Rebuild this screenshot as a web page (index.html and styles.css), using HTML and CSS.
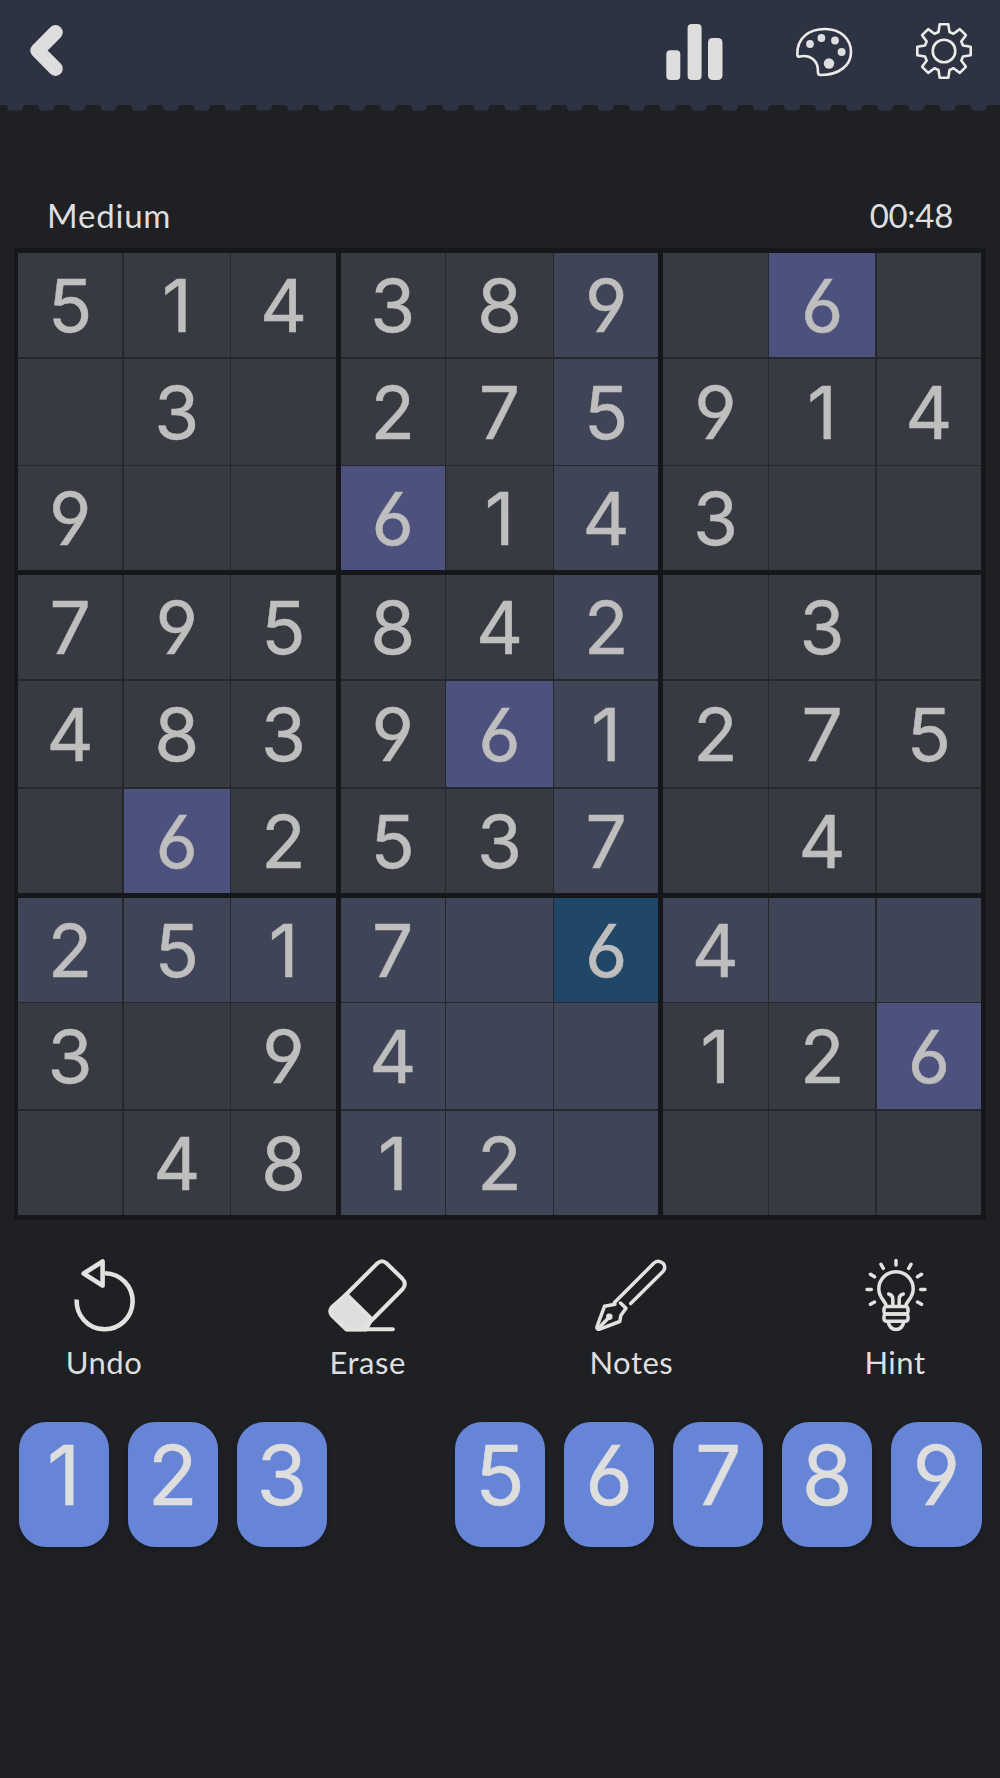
FILE: index.html
```html
<!DOCTYPE html>
<html lang="en">

<head>
    <meta charset="UTF-8">
    <meta name="viewport" content="width=device-width, initial-scale=1.0">
    <title>Sudoku</title>
    <link rel="stylesheet" href="styles.css">
</head>

<body>
    <header class="topbar">
        <svg class="icon-back" viewBox="28 20 40 62">
            <path d="M55.5 32.3 L37.5 50.5 L55.5 68.7" />
        </svg>
        <div class="topbar-actions">
            <svg class="icon-stats" viewBox="664 20 62 62">
                <rect x="666.3" y="50.3" width="14" height="29.7" rx="4" />
                <rect x="687.6" y="24" width="14" height="56" rx="4" />
                <rect x="708" y="38" width="14.5" height="42" rx="4.5" />
            </svg>
            <svg class="icon-line" viewBox="793 20 62 62">
                <path d="M797.3 55 C796.6 38 809 29 825 29 C841 29 851 39.5 851 52 C851 65 840 75 820 75 Q817.7 74.6 817.9 71 C818 61 810.5 54 799.5 56.6 Q797.5 56.9 797.3 55 Z" />
                <g class="dots">
                    <circle cx="810" cy="44" r="3.9" />
                    <circle cx="821.4" cy="38" r="3.9" />
                    <circle cx="835" cy="40.5" r="3.9" />
                    <circle cx="841.6" cy="52" r="4" />
                    <circle cx="829" cy="63.5" r="5.2" />
                </g>
            </svg>
            <svg class="icon-line" viewBox="-31 -31 62 62">
                <path d="M-5.5 -19 L-4.3 -26.7 L4.3 -26.7 L5.5 -19 L9.5 -17.3 L15.8 -21.9 L21.9 -15.8 L17.3 -9.5 L19 -5.5 L26.7 -4.3 L26.7 4.3 L19 5.5 L17.3 9.5 L21.9 15.8 L15.8 21.9 L9.5 17.3 L5.5 19 L4.3 26.7 L-4.3 26.7 L-5.5 19 L-9.5 17.3 L-15.8 21.9 L-21.9 15.8 L-17.3 9.5 L-19 5.5 L-26.7 4.3 L-26.7 -4.3 L-19 -5.5 L-17.3 -9.5 L-21.9 -15.8 L-15.8 -21.9 L-9.5 -17.3 Z" />
                <circle r="11.3" />
            </svg>
        </div>
    </header>
    <svg class="teeth" width="1000" height="6">
        <defs>
            <pattern id="tooth" width="31.07" height="6" patternUnits="userSpaceOnUse">
                <path d="M6.8 0 H24 L22 4.4 Q21.4 5.5 20.4 5.5 H10 Q9 5.5 8.6 4.4 Z" />
            </pattern>
        </defs>
        <rect width="1000" height="6" fill="url(#tooth)" />
    </svg>

    <main>
        <div class="info">
            <span class="level">Medium</span>
            <span class="timer">00:48</span>
        </div>

        <!-- Board is filled in by the script, one box at a time -->
        <div class="board" id="board"></div>

        <div class="tools">
            <div class="tool">
                <svg viewBox="64 1255 80 80">
                    <path class="thick" d="M76.7 1299.5 A28 28 0 1 0 105 1273.2" />
                    <path class="thick" d="M83.7 1273.5 L102.6 1261.5 V1285.6 Z" />
                </svg>
                <span>Undo</span>
            </div>
            <div class="tool">
                <svg viewBox="328 1255 80 80">
                    <path class="solid" d="M346.5 1294.5 L371.5 1319 L366 1329.5 H346.5 L332 1315.5 Q328.5 1311 332 1307 Z" />
                    <path d="M333 1307.5 L377.5 1263.2 Q382 1259.3 386.5 1263.2 L402.5 1278.8 Q407 1283.5 402.7 1289 L366 1326" />
                    <path d="M347 1329.2 H392.8" />
                </svg>
                <span>Erase</span>
            </div>
            <div class="tool">
                <svg class="thin" viewBox="592 1255 80 80">
                    <path d="M631.7 1303.5 L664 1271.5 Q667.5 1267 664 1263.3 Q659.5 1259.3 655 1263 L615.5 1302.5" />
                    <path d="M621.5 1303 L627 1308.3 L621.8 1315.5 L620.8 1321.5 L600 1329.3 Q597.5 1329.5 598 1326.5 L605.5 1306.3 L616 1304.3" />
                    <path d="M599 1328.5 L610.5 1317" />
                    <circle class="solid" cx="610.3" cy="1316.8" r="1.5" />
                </svg>
                <span>Notes</span>
            </div>
            <div class="tool">
                <svg class="thin" viewBox="855 1255 80 80">
                    <path d="M886 1305.5 C885.5 1301 878.8 1298 878.8 1289 A17.2 17.2 0 0 1 913.2 1289 C913.2 1298 906.5 1301 906 1305.5" />
                    <path d="M888.7 1294 Q892.8 1295 892.8 1299 V1305 M903.3 1294 Q899.2 1295 899.2 1299 V1305" />
                    <rect x="884" y="1306.5" width="24" height="7.5" rx="2.5" />
                    <rect x="884" y="1314" width="24" height="7.2" rx="2.5" />
                    <path d="M888 1321.5 Q890 1329.6 896 1329.6 Q902 1329.6 904 1321.5" />
                    <path d="M896 1260.6 V1265 M881 1264.3 L883.3 1268.3 M911 1264.3 L908.7 1268.3 M870.5 1274.3 L874.5 1276.8 M921.5 1274.3 L917.5 1276.8 M867 1289.6 H871.3 M925 1289.6 H920.7 M870.5 1304.3 L874.5 1302 M921.5 1304.3 L917.5 1302" />
                </svg>
                <span>Hint</span>
            </div>
        </div>

        <div class="keypad">
            <div class="key">1</div>
            <div class="key">2</div>
            <div class="key">3</div>
            <div class="key used"></div>
            <div class="key">5</div>
            <div class="key">6</div>
            <div class="key">7</div>
            <div class="key">8</div>
            <div class="key">9</div>
        </div>
    </main>

    <script>
        const rows = [
            '514389.6.',
            '.3.275914',
            '9..6143..',
            '795842.3.',
            '483961275',
            '.62537.4.',
            '2517.64..',
            '3.94..126',
            '.4812....'
        ];
        const selected = { row: 6, col: 5 };
        const board = document.getElementById('board');

        function cellClass(row, col) {
            if (row === selected.row && col === selected.col) return 'cell selected';
            if (rows[row][col] === rows[selected.row][selected.col]) return 'cell same';
            const sameBox = Math.floor(row / 3) === Math.floor(selected.row / 3) &&
                Math.floor(col / 3) === Math.floor(selected.col / 3);
            if (row === selected.row || col === selected.col || sameBox) return 'cell related';
            return 'cell';
        }

        for (let b = 0; b < 9; b++) {
            const box = document.createElement('div');
            box.className = 'box';
            for (let i = 0; i < 9; i++) {
                const row = Math.floor(b / 3) * 3 + Math.floor(i / 3);
                const col = (b % 3) * 3 + i % 3;
                const cell = document.createElement('div');
                cell.className = cellClass(row, col);
                cell.textContent = rows[row][col] === '.' ? '' : rows[row][col];
                box.appendChild(cell);
            }
            board.appendChild(box);
        }
    </script>
</body>

</html>
```

FILE: styles.css
```css
/* General Styles */
* {
    box-sizing: border-box;
}

body {
    margin: 0;
    width: 1000px;
    height: 1778px;
    overflow: hidden;
    background: #1f2024;
    color: #dedede;
    font-family: Lato, 'Liberation Sans', sans-serif;
}

svg {
    display: block;
    flex: none;
}

/* Top bar */
.topbar {
    height: 105px;
    padding: 20px 25px 0 28px;
    display: flex;
    justify-content: space-between;
    align-items: flex-start;
    background: #2e3343;
}

.topbar-actions {
    display: flex;
}

.topbar-actions svg {
    width: 62px;
    height: 62px;
}

.topbar-actions .icon-stats {
    margin-right: 67px;
}

.topbar-actions .icon-line + .icon-line {
    margin-left: 58px;
}

.icon-back {
    width: 40px;
    height: 62px;
    fill: none;
    stroke: #dedede;
    stroke-width: 14.5;
    stroke-linecap: round;
    stroke-linejoin: round;
}

.icon-stats {
    fill: #dedede;
}

.icon-line {
    fill: none;
    stroke: #ebebe8;
    stroke-width: 2.6;
    stroke-linejoin: round;
}

.dots {
    fill: #dedede;
    stroke: none;
}

.teeth {
    fill: #2e3343;
}

/* Level and timer */
.info {
    height: 137px;
    padding: 83px 47px 0 47px;
    display: flex;
    justify-content: space-between;
    font-size: 33px;
    line-height: 42px;
}

.level {
    letter-spacing: 0.8px;
}

.timer {
    font-size: 33px;
    letter-spacing: -0.3px;
}

/* Board */
.board {
    width: 972px;
    height: 972px;
    margin-left: 14px;
    padding: 5px 5px 5px 4px;
    display: grid;
    grid-template: repeat(3, 1fr) / repeat(3, 1fr);
    gap: 5px;
    background: #16171a;
}

.box {
    display: grid;
    grid-template: 104fr 106fr 104fr / 104fr 106fr 104fr;
    gap: 1.5px;
    background: #25282d;
}

.cell {
    display: flex;
    justify-content: center;
    align-items: center;
    padding-top: 1px;
    min-width: 0;
    min-height: 0;
    background: #373a41;
    color: #bebebe;
    font-family: Inter, 'Liberation Sans', sans-serif;
    font-size: 73px;
    line-height: 1;
    font-feature-settings: 'cv03', 'cv04';
    -webkit-text-stroke: 0.5px #bebebe;
}

.cell.related {
    background: #3f4457;
}

.cell.same {
    background: #4d517d;
}

.cell.selected {
    background: #204767;
}

/* Tools */
.tools {
    display: flex;
    justify-content: space-between;
    padding: 35px 30px 0 29px;
}

.tool {
    width: 150px;
    display: flex;
    flex-direction: column;
    align-items: center;
    font-size: 31px;
    line-height: 40px;
    letter-spacing: 0.5px;
}

.tool svg {
    width: 80px;
    height: 80px;
    margin-bottom: 7px;
    fill: none;
    stroke: #e2e2e0;
    stroke-width: 4;
    stroke-linecap: round;
    stroke-linejoin: round;
}

.tool svg.thin {
    stroke-width: 3.5;
}

.tool .thick {
    stroke-width: 4.6;
    stroke-linecap: butt;
}

.tool .solid {
    fill: #dedede;
}

/* Number keys */
.keypad {
    display: flex;
    justify-content: space-between;
    padding: 40px 18.5px 0 18.5px;
}

.key {
    width: 90.5px;
    height: 125px;
    padding-top: 13px;
    border-radius: 27px;
    background: #6785d6;
    box-shadow: 0 3px 6px rgba(0, 0, 0, 0.2);
    text-align: center;
    font-family: Inter, 'Liberation Sans', sans-serif;
    font-size: 82px;
    line-height: 82px;
    font-feature-settings: 'cv03', 'cv04';
    -webkit-text-stroke: 0.5px #dedede;
}

.key.used {
    visibility: hidden;
}
```
